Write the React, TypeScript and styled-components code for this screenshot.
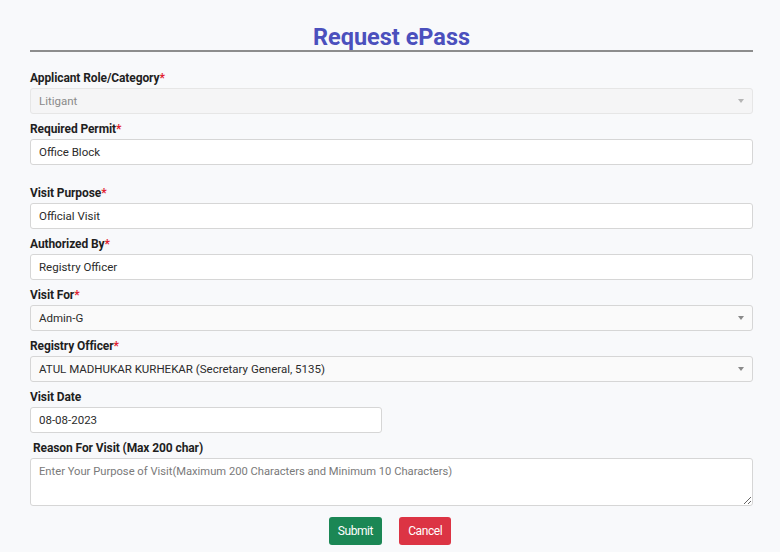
import React from "react";
import styled, { createGlobalStyle } from "styled-components";

const Global = createGlobalStyle`
  html, body { margin: 0; padding: 0; background: #f8f9fb; }
  body { font-family: Roboto, "Liberation Sans", sans-serif; color: #222; }
  * { box-sizing: border-box; }
`;

const Page = styled.div`
  width: 780px;
  height: 552px;
  padding: 24px 27px 0 30px;
  display: flex;
  flex-direction: column;
`;

const Title = styled.h1`
  margin: 0;
  font-size: 23.5px;
  line-height: 26px;
  font-weight: 700;
  color: #4b50bd;
  text-align: center;
  padding-bottom: 0;
  border-bottom: 2px solid #8d8d8d;
`;

const Form = styled.form`
  margin-top: 19px;
  display: flex;
  flex-direction: column;
  gap: 8px;
`;

const Group = styled.div<{ $extraTop?: number; $width?: number }>`
  display: flex;
  flex-direction: column;
  margin-top: ${(p) => p.$extraTop ?? 0}px;
  width: ${(p) => (p.$width ? `${p.$width}px` : "100%")};
`;

const Label = styled.label<{ $indent?: number }>`
  font-size: 12px;
  line-height: 15px;
  font-weight: 700;
  color: #1f1f1f;
  margin-bottom: 2px;
  padding-left: ${(p) => p.$indent ?? 0}px;
  letter-spacing: -0.1px;
`;

const Star = styled.span`
  color: #e0202e;
`;

const fieldBase = `
  height: 26px;
  width: 100%;
  border: 1px solid #d6d6d6;
  border-radius: 3px;
  font-family: Roboto, "Liberation Sans", sans-serif;
  font-size: 11.5px;
  color: #2b2b2b;
  padding: 0 8px;
  display: flex;
  align-items: center;
`;

const Input = styled.div`
  ${fieldBase}
  background: #ffffff;
`;

const Select = styled.div<{ $disabled?: boolean }>`
  ${fieldBase}
  background: ${(p) => (p.$disabled ? "#f5f5f6" : "#fafafa")};
  border-color: ${(p) => (p.$disabled ? "#e6e6e6" : "#d6d6d6")};
  color: ${(p) => (p.$disabled ? "#8a8a8a" : "#2b2b2b")};
  justify-content: space-between;
  padding-right: 8px;
`;

const Caret = styled.span<{ $light?: boolean }>`
  width: 0;
  height: 0;
  border-left: 3px solid transparent;
  border-right: 3px solid transparent;
  border-top: 4px solid ${(p) => (p.$light ? "#b5b5b5" : "#8a8a8a")};
`;

const TextArea = styled.textarea`
  height: 48px;
  width: 100%;
  border: 1px solid #d6d6d6;
  border-radius: 3px;
  background: #fff;
  font-family: Roboto, "Liberation Sans", sans-serif;
  font-size: 11.2px;
  padding: 6px 8px;
  color: #2b2b2b;
  resize: vertical;
  &::placeholder { color: #7a7a7a; }
`;

const Actions = styled.div`
  margin-top: 3px;
  display: flex;
  justify-content: center;
  gap: 17px;
  margin-right: 3px;
`;

const Button = styled.button<{ $variant: "ok" | "cancel" }>`
  height: 28px;
  padding: 0 9px;
  border: none;
  border-radius: 3px;
  color: #fff;
  font-family: Roboto, "Liberation Sans", sans-serif;
  font-size: 12px;
  letter-spacing: -0.4px;
  background: ${(p) => (p.$variant === "ok" ? "#1b8755" : "#dc3444")};
`;

function Field({ label, req = true, children, extraTop, width, indent }: {
  label: string; req?: boolean; children: React.ReactNode; extraTop?: number; width?: number; indent?: number;
}) {
  return (
    <Group $extraTop={extraTop} $width={width}>
      <Label $indent={indent}>
        {label}
        {req && <Star>*</Star>}
      </Label>
      {children}
    </Group>
  );
}

export default function App() {
  return (
    <>
      <Global />
      <Page>
        <Title>Request ePass</Title>
        <Form onSubmit={(e) => e.preventDefault()}>
          <Field label="Applicant Role/Category">
            <Select $disabled>
              <span>Litigant</span>
              <Caret $light />
            </Select>
          </Field>
          <Field label="Required Permit">
            <Input>Office Block</Input>
          </Field>
          <Field label="Visit Purpose" extraTop={13}>
            <Input>Official Visit</Input>
          </Field>
          <Field label="Authorized By">
            <Input>Registry Officer</Input>
          </Field>
          <Field label="Visit For">
            <Select>
              <span>Admin-G</span>
              <Caret />
            </Select>
          </Field>
          <Field label="Registry Officer">
            <Select>
              <span>ATUL MADHUKAR KURHEKAR (Secretary General, 5135)</span>
              <Caret />
            </Select>
          </Field>
          <Field label="Visit Date" req={false} width={352}>
            <Input>08-08-2023</Input>
          </Field>
          <Field label="Reason For Visit (Max 200 char)" req={false} indent={3}>
            <TextArea placeholder="Enter Your Purpose of Visit(Maximum 200 Characters and Minimum 10 Characters)" />
          </Field>
          <Actions>
            <Button type="submit" $variant="ok">Submit</Button>
            <Button type="button" $variant="cancel">Cancel</Button>
          </Actions>
        </Form>
      </Page>
    </>
  );
}
